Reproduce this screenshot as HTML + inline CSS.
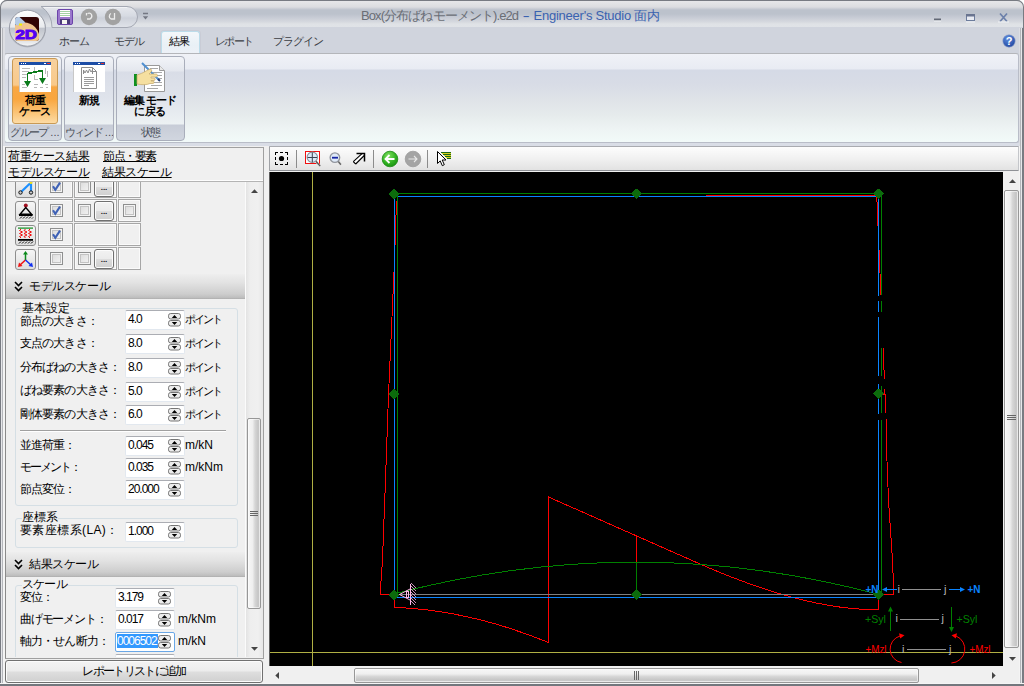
<!DOCTYPE html>
<html lang="ja">
<head>
<meta charset="utf-8">
<title>Engineer's Studio</title>
<style>
html,body{margin:0;padding:0;}
body{width:1024px;height:686px;overflow:hidden;position:relative;background:#fff;font-family:"Liberation Sans",sans-serif;font-size:12px;color:#000;}
.abs{position:absolute;}
.t{position:absolute;white-space:nowrap;line-height:14px;}
/* ---------- window frame ---------- */
#frame{left:0;top:0;width:1024px;height:686px;box-sizing:border-box;background:#d3d7e0;border-radius:7px 7px 0 0;overflow:hidden;}
#frameline{left:0;top:0;width:1024px;height:686px;box-sizing:border-box;border:1px solid #787b82;border-bottom:none;border-radius:7px 7px 0 0;pointer-events:none;}
#client{left:3px;top:146px;width:1018px;height:538px;background:#f0f0f0;}
#titlebar{left:0;top:0;width:1024px;height:27px;background:linear-gradient(#8c8c8c 0px,#8c8c8c 1px,#e7e7e9 1px,#dcdde0 7px,#c6cad2 9px,#bcc2cc 10px,#bcc2cc 14px,#c9cdd6 18px,#d6d9df 22px,#dfe2e6 24px,#e0e3e7 27px);}
#tabrow{left:0;top:27px;width:1024px;height:27px;background:#d0d4dd;}
#ribbon{left:4px;top:53px;width:1015px;height:90px;box-sizing:border-box;border:1px solid #b9bdc8;border-top-color:#b4b6ba;border-radius:3px;background:linear-gradient(#f0f2f7 0px,#e8ebf3 15px,#d5dae6 16px,#d8dce6 30px,#dfe3e8 46px,#e6ebec 61px,#eef4f4 76px,#f2faf9 88px);}
#belowrib{left:0;top:143px;width:1024px;height:4px;background:#d9dde6;}
#lborder,#rborder,#bborder{z-index:5}
#lborder{left:0;top:28px;width:5px;height:658px;background:linear-gradient(#dcdee3 0,#dcdee3 118px,#f4f4f4 118px) 3px 0/2px 100% no-repeat,linear-gradient(90deg,#787b82 0,#787b82 1px,#e6e7ea 1px,#e6e7ea 2px,#b4b6bb 2px,#b4b6bb 3px,#dcdee3 3px,#dcdee3 5px);}
#rborder{left:1019px;top:28px;width:5px;height:658px;background:linear-gradient(#dcdee3 0,#dcdee3 118px,#f4f4f4 118px) 0 0/1px 100% no-repeat,linear-gradient(90deg,#dcdee3 0,#dcdee3 1px,#b4b6bb 1px,#b4b6bb 2px,#e6e7ea 2px,#e6e7ea 3px,#787b82 3px,#787b82 5px);}
#bborder{left:0;top:683px;width:1024px;height:3px;background:linear-gradient(#f4f4f4 0,#f4f4f4 1px,#73777d 1px,#73777d 3px);}
#title{left:361px;top:8px;font-size:13px;line-height:16px;color:#6a6e76;}
#title .g{letter-spacing:-0.9px;}
#title .d{color:#3a62b0;position:absolute;left:163px;top:0;display:inline-block;transform:scaleX(1.7);}
#title .b{color:#3a62b0;letter-spacing:-0.24px;position:absolute;left:169.200px;top:0;white-space:pre;}
.tab{position:absolute;top:34px;font-size:11px;letter-spacing:-1.1px;line-height:14px;color:#3a3d44;white-space:nowrap;}
#tabsel{left:161px;top:31px;width:39px;height:23px;box-sizing:border-box;border:1px solid #bcdcea;border-bottom:none;border-radius:3px 3px 0 0;background:linear-gradient(#f3f7fa,#e9f0f6 60%,#edf1f7);box-shadow:0 0 0 1px #c9ccd6;}
/* ---------- ribbon groups ---------- */
.grp{position:absolute;top:56px;height:85px;box-sizing:border-box;border:1px solid #a9aebb;border-radius:4px;background:linear-gradient(#f2f4f8 0,#e4e7ee 14px,#d9dde7 15px,#dfe3eb 40px,#ecf1f3 67px,#c7ccd7 68px,#d1d6df 83px);overflow:hidden;}
.grp .lbl{position:absolute;left:0;right:0;top:68px;text-align:center;font-size:11px;letter-spacing:-1.8px;line-height:14px;color:#4a4f59;white-space:nowrap;}
.btxt{position:absolute;font-size:11px;letter-spacing:-0.6px;line-height:11px;font-weight:bold;color:#000;text-align:center;white-space:nowrap;}
#actbtn{left:12px;top:58px;width:46px;height:66px;box-sizing:border-box;border:1px solid #c99a55;border-radius:3px;background:linear-gradient(#f7d19e 0,#f9c98a 26px,#f8a744 28px,#f9a63f 40px,#fbc77c 55px,#fde0ae 66px);}
/* ---------- left panel ---------- */
#lpanel{left:5px;top:147px;width:259px;height:512px;box-sizing:border-box;border:1px solid #a0a0a0;border-left-color:#8a8a8a;background:#f0f0f0;}
#links{left:6px;top:148px;width:257px;height:34px;background:#f0f0f0;border-bottom:1px solid #b4b4b4;box-shadow:inset 0 -1px 0 #fdfdfd;box-sizing:border-box;}
.lnk{position:absolute;font-size:12px;letter-spacing:-0.4px;line-height:14px;text-decoration:underline;white-space:nowrap;color:#000;}
#lscroll{left:245px;top:182px;width:18px;height:475px;background:linear-gradient(90deg,#fbfbfb 0,#fbfbfb 1px,#e3e3e3 1px,#eeeeee 5px,#f0f0f0 13px,#e6e6e6 18px,#e6e6e6 19px);box-sizing:border-box;}
.vthumb{position:absolute;box-sizing:border-box;border:1px solid #979797;border-radius:2px;background:linear-gradient(90deg,#f7f7f7 0,#efefef 38%,#d6d6d6 58%,#c5c5c5 85%,#d2d2d2 100%);box-shadow:inset 0 0 0 1px rgba(255,255,255,.55);}
.hthumb{position:absolute;box-sizing:border-box;border:1px solid #979797;border-radius:2px;background:linear-gradient(#f7f7f7 0,#efefef 38%,#d6d6d6 58%,#c5c5c5 85%,#d2d2d2 100%);box-shadow:inset 0 0 0 1px rgba(255,255,255,.55);}
.sechdr{position:absolute;left:6px;width:239px;height:24px;background:linear-gradient(#eeeeee,#e2e2e2 35%,#cdcdcd 80%,#bcbcbc 96%,#a9a9a9);}
.sechdr .t{left:23px;top:5px;font-size:12px;letter-spacing:-0.4px;}
.leg{font-size:12px;background:#f0f0f0;}
.gbox{position:absolute;box-sizing:border-box;border:1px solid #d5dfe5;border-radius:3px;}
.lab{position:absolute;left:20px;font-size:12px;line-height:14px;white-space:nowrap;letter-spacing:-0.9px;}
.inp{position:absolute;width:60px;height:20px;box-sizing:border-box;background:#fff;border:1px solid #e2e8ef;border-top-color:#abadb3;border-radius:2px;}
.inp.foc{border-color:#6aa7e6;}
.inp .v{position:absolute;left:2px;top:1px;font-size:12px;line-height:14px;letter-spacing:-1px;white-space:nowrap;}
.inp .v.sel{background:#3399ff;color:#fff;left:1px;width:41px;overflow:hidden;}
.unit{position:absolute;font-size:12px;line-height:14px;white-space:nowrap;}
.unit.jp{font-size:11px;letter-spacing:-1.9px;}
.spin{position:absolute;right:3px;top:2px;width:13px;height:14px;}
.cell{position:absolute;box-sizing:border-box;border:1px solid #a6a6a6;background:#f0f0f0;box-shadow:inset 0 0 0 1px #fafafa;}
.chk{position:absolute;width:13px;height:13px;box-sizing:border-box;border:1px solid #8e8f8f;background:linear-gradient(135deg,#d8d8d8,#f6f6f6);box-shadow:inset 0 0 0 1px #f4f4f4,inset 0 0 0 2px #c3c3c3;}
.dots{position:absolute;width:20px;height:20px;box-sizing:border-box;border:1px solid #707070;border-radius:3px;background:linear-gradient(#f2f2f2,#ebebeb 50%,#dddddd 51%,#cfcfcf);box-shadow:inset 0 0 0 1px #fcfcfc;font-size:8px;font-weight:bold;letter-spacing:0;color:#111;line-height:19px;text-align:center;}
.ibtn{position:absolute;left:15px;width:21px;height:21px;box-sizing:border-box;border:1px solid #8e8e8e;border-radius:3px;background:linear-gradient(#f6f6f6,#dedede);}
#addbtn{left:5px;top:660px;width:258px;height:23px;box-sizing:border-box;border:1px solid #707070;border-radius:3px;background:linear-gradient(#f3f3f3,#ececec 48%,#dedede 52%,#d0d0d0);box-shadow:inset 0 0 0 1px #fbfbfb;text-align:center;font-size:12px;letter-spacing:-1.7px;line-height:20px;}
/* ---------- canvas ---------- */
#ctool{left:269px;top:146px;width:750px;height:25px;box-sizing:border-box;border:1px solid #c4c6ca;border-top-color:#a9abb0;border-left-color:#a0a2a6;border-bottom-color:#8f9196;border-radius:1px;background:linear-gradient(#fdfdfd,#f1f1f1 50%,#e2e2e2);}
#canvas{left:270px;top:172px;width:733px;height:494px;background:#000;box-shadow:-1px 0 0 #5a5a5a;}
#vscroll{left:1003px;top:172px;width:16px;height:494px;background:#f0f0f0;}
#hscroll{left:270px;top:666px;width:733px;height:17px;background:#f0f0f0;}
#corner{left:1003px;top:666px;width:16px;height:17px;background:#f0f0f0;}
#csplit{left:263px;top:147px;width:7px;height:536px;background:#f0f0f0;}
</style>
</head>
<body>
<div id="frame" class="abs">
<div id="titlebar" class="abs"></div>
<div id="tabrow" class="abs"></div>
<div id="lborder" class="abs"></div>
<div id="rborder" class="abs"></div>
<div id="bborder" class="abs"></div>
<div id="title" class="t"><span class="g">Box(分布ばねモーメント).e2d </span><span class="d">-</span><span class="b"> Engineer's Studio 面内</span></div>
<div id="tabsel" class="abs"></div>
<div class="tab" style="left:59px">ホーム</div>
<div class="tab" style="left:114px">モデル</div>
<div class="tab" style="left:169px;color:#000">結果</div>
<div class="tab" style="left:215px;letter-spacing:-1.7px">レポート</div>
<div class="tab" style="left:273px">プラグイン</div>
<div id="ribbon" class="abs"></div>
<div id="belowrib" class="abs"></div>
<div id="client" class="abs"></div>

<div class="grp" style="left:8px;width:54px"><div class="lbl">グループ<span style="letter-spacing:0"> ...</span></div></div>
<div class="grp" style="left:64px;width:50px"><div class="lbl">ウィンド<span style="letter-spacing:0"> ...</span></div></div>
<div class="grp" style="left:116px;width:69px"><div class="lbl">状態</div></div>
<div id="actbtn" class="abs"></div>
<!-- icon 1: load case window -->
<svg class="abs" style="left:19px;top:62px" width="32" height="30" viewBox="0 0 32 30" shape-rendering="crispEdges">
<rect x="0" y="0" width="32" height="30" fill="#fff" stroke="#c8c8c8" stroke-width="1"/>
<rect x="0" y="0" width="32" height="3" fill="#1c4da6"/>
<rect x="28" y="1" width="3" height="1" fill="#e03030"/><rect x="25" y="1" width="2" height="1" fill="#fff"/>
<rect x="2" y="1" width="1" height="1" fill="#fff"/><rect x="4" y="1" width="1" height="1" fill="#fff"/><rect x="6" y="1" width="1" height="1" fill="#fff"/>
<g fill="#b8b8b8"><rect x="3" y="6" width="8" height="1"/><rect x="3" y="9" width="7" height="1"/><rect x="3" y="12" width="5" height="1"/><rect x="3" y="15" width="4" height="1"/><rect x="3" y="22" width="3" height="1"/><rect x="3" y="25" width="5" height="1"/><rect x="15" y="5" width="1" height="4"/><rect x="26" y="6" width="1" height="6"/><rect x="28" y="9" width="1" height="6"/><rect x="15" y="13" width="1" height="5"/><rect x="16" y="17" width="3" height="1"/><rect x="15" y="22" width="4" height="1"/><rect x="15" y="25" width="3" height="1"/><rect x="21" y="25" width="3" height="1"/><rect x="26" y="22" width="3" height="1"/><rect x="27" y="25" width="2" height="1"/></g>
<path d="M8.5 21V11.5L23.5 8.5V18" fill="none" stroke="#0a7a1a" stroke-width="1.6"/>
<path d="M5 19h7l-3.5 6z M20 16h7l-3.5 6z" fill="#0a7a1a" shape-rendering="auto"/>
</svg>
<div class="btxt" style="left:12px;width:46px;top:95px">荷重</div>
<div class="btxt" style="left:12px;width:46px;top:106px">ケース</div>
<!-- icon 2: new window -->
<svg class="abs" style="left:73px;top:62px" width="32" height="30" viewBox="0 0 32 30" shape-rendering="crispEdges">
<rect x="0" y="0" width="32" height="30" fill="#fff" stroke="#c8c8c8" stroke-width="1"/>
<rect x="0" y="0" width="32" height="3" fill="#1c4da6"/>
<rect x="28" y="1" width="3" height="1" fill="#e03030"/><rect x="25" y="1" width="2" height="1" fill="#fff"/>
<rect x="2" y="1" width="1" height="1" fill="#fff"/><rect x="4" y="1" width="1" height="1" fill="#fff"/><rect x="6" y="1" width="1" height="1" fill="#fff"/>
<path d="M8.5 5.5h11l4 4v17h-15z" fill="#fff" stroke="#8c8c8c" stroke-width="1" shape-rendering="auto"/>
<path d="M19.5 5.5v4h4" fill="none" stroke="#8c8c8c" stroke-width="1" shape-rendering="auto"/>
<path d="M10.5 12v-4l1.5 3 1.5-3 1.5 3 1.5-4 1.5 3 1.5-2v4" fill="none" stroke="#8c8c8c" stroke-width="1" shape-rendering="auto"/>
<g fill="#9a9a9a"><rect x="11" y="15" width="10" height="1"/><rect x="11" y="17" width="10" height="1"/><rect x="11" y="19" width="10" height="1"/><rect x="11" y="21" width="10" height="1"/><rect x="11" y="23" width="5" height="1"/></g>
</svg>
<div class="btxt" style="left:64px;width:50px;top:95px">新規</div>
<!-- icon 3: hand writing -->
<svg class="abs" style="left:133px;top:61px" width="34" height="32" viewBox="0 0 34 32">
<path d="M11.5 4.5h15l5 5v21h-20z" fill="#fff" stroke="#9a9a9a"/>
<path d="M26.5 4.5v5h5" fill="#e8e8e8" stroke="#9a9a9a"/>
<g fill="#a8a8a8"><rect x="17" y="7" width="8" height="1"/><rect x="20" y="11" width="9" height="1"/><rect x="24" y="14" width="5" height="1"/><rect x="24" y="17" width="5" height="1"/><rect x="20" y="21" width="9" height="1"/><rect x="18" y="24" width="11" height="1"/><rect x="14" y="27" width="11" height="1"/></g>
<path d="M9 2L26 19" stroke="#4f8fd0" stroke-width="2"/><path d="M25 18l2 2" stroke="#203a70" stroke-width="2"/>
<rect x="1" y="13" width="3" height="12" fill="#109020"/>
<path d="M4 14c3-1 6-2 9-4l4-2c2 0 2 2 1 3l-2 2h7c2 0 2 3 0 3h-5v1h3c1.500 0 1.500 2.500 0 2.500h-3v.5h2c1.500 0 1.500 2.500 0 2.500h-3c-3 1.500-8 1.500-13 .5z" fill="#f5dfa0" stroke="#c4a868" stroke-width=".7"/>
</svg>
<div class="btxt" style="left:116px;width:68px;top:95px;letter-spacing:-1.1px">編集 モード</div>
<div class="btxt" style="left:116px;width:68px;top:106px">に戻る</div>
<!--RIBBON-->

<!-- quick access toolbar pill -->
<svg class="abs" style="left:0;top:0" width="160" height="56" viewBox="0 0 160 56">
<defs>
<linearGradient id="qg" x1="0" y1="0" x2="0" y2="1"><stop offset="0" stop-color="#e6e8ed"/><stop offset=".45" stop-color="#d6dae2"/><stop offset=".55" stop-color="#cdd1da"/><stop offset="1" stop-color="#e0e3e9"/></linearGradient>
<linearGradient id="ab2" x1="0" y1="0" x2="0" y2="1"><stop offset="0" stop-color="#fefefe"/><stop offset=".47" stop-color="#e9ebee"/><stop offset=".5" stop-color="#c0c4cc"/><stop offset=".78" stop-color="#d6d9de"/><stop offset="1" stop-color="#f6f7f8"/></linearGradient>
<clipPath id="lg"><rect x="15" y="17" width="24" height="24" rx="3"/></clipPath>
</defs>
<path d="M41 6.500H127a10.500 10.500 0 0 1 0 21H52A25 25 0 0 0 41 6.500z" fill="url(#qg)" stroke="#a4a8b3" stroke-width="1"/>
<path d="M44 7.500H127" stroke="#f1f2f5" stroke-width="1" fill="none"/>
<circle cx="27.400" cy="28.800" r="18.600" fill="#b4b8c1"/>
<circle cx="27.400" cy="28.200" r="18" fill="url(#ab2)" stroke="#9a9ea8" stroke-width="1"/>
<!-- app logo -->
<g clip-path="url(#lg)">
<rect x="15" y="17" width="24" height="24" fill="#320404"/>
<circle cx="24" cy="38" r="15.500" fill="#efc48e"/>
<path d="M15 17h4.500l6 5.500-8.500 3-2-1z" fill="#b4cbe6"/>
<rect x="19" y="23.500" width="3" height="2" fill="#f4f000"/>
</g>
<text x="15.500" y="38.800" font-family="Liberation Sans, sans-serif" font-weight="bold" font-size="12.500" fill="#5200f4" stroke="#5200f4" stroke-width=".9" textLength="21.500" lengthAdjust="spacingAndGlyphs">2D</text>
<!-- save -->
<rect x="57.500" y="9.500" width="15" height="15" rx="1.500" fill="#9a78cc" stroke="#6c44aa"/>
<rect x="60" y="10" width="10" height="7" fill="#fff"/><path d="M60 11.500h10M60 13.500h10M60 15.500h10" stroke="#a4d4a4" stroke-width="1"/>
<rect x="60" y="19" width="10" height="5" fill="#4a3a78"/><rect x="62" y="20" width="5" height="4" fill="#f6f6f0"/>
<!-- undo / redo disabled -->
<circle cx="89" cy="17" r="8.200" fill="#a2a2a2"/><circle cx="113" cy="17" r="8.200" fill="#a2a2a2"/>
<path d="M87.500 13.500c4-1.500 6 3 2.500 5.500h-3" fill="none" stroke="#ececec" stroke-width="1.300"/><path d="M86.500 13v2.500" stroke="#ececec" stroke-width="1.300"/>
<path d="M114.500 13v6h-3.500c-2.500-1-2-4.500 0-5.500" fill="none" stroke="#ececec" stroke-width="1.300"/>
<!-- customize -->
<path d="M143 13.500h5" stroke="#747883" stroke-width="1.500"/><path d="M142.800 16.200h5.400l-2.700 3.200z" fill="#747883"/>
</svg>
<!-- window controls -->
<svg class="abs" style="left:925px;top:8px" width="95" height="20" viewBox="0 0 95 20">
<rect x="9" y="10.500" width="7" height="2" fill="#636976"/><rect x="9" y="12.500" width="7" height="1" fill="#f2f3f6"/>
<rect x="41.500" y="6.500" width="8" height="6" fill="#e8ebf2" stroke="#6c7c9c" stroke-width="1"/><rect x="41" y="6" width="9" height="2.500" fill="#6a7590"/><rect x="41" y="13.500" width="9" height="1" fill="#f2f3f6"/>
<path d="M75 5.500l7 8M82 5.500l-7 8" stroke="#6c80aa" stroke-width="1.700"/><rect x="73" y="13.500" width="11" height="1" fill="#f2f3f6"/>
</svg>
<svg class="abs" style="left:1001px;top:33px" width="16" height="16" viewBox="0 0 16 16">
<defs><radialGradient id="hg" cx=".4" cy=".3" r=".8"><stop offset="0" stop-color="#5f8fe0"/><stop offset="1" stop-color="#1a3f9a"/></radialGradient></defs>
<circle cx="8" cy="8" r="6.200" fill="url(#hg)" stroke="#8f9fc8" stroke-width=".6"/>
<text x="8" y="12" text-anchor="middle" font-family="Liberation Sans, sans-serif" font-weight="bold" font-size="11" fill="#fff">?</text>
</svg>
<!--CHROMEICONS-->
<div id="csplit" class="abs"></div>
<div id="lpanel" class="abs"></div>
<div id="links" class="abs"></div>
<div class="lnk" style="left:8px;top:149px">荷重ケース結果</div>
<div class="lnk" style="left:103px;top:149px;letter-spacing:-1.4px">節点・要素</div>
<div class="lnk" style="left:8px;top:165px">モデルスケール</div>
<div class="lnk" style="left:102px;top:165px">結果スケール</div>
<div class="abs" style="left:6px;top:182px;width:240px;height:475px;overflow:hidden"><div class="abs" style="left:-6px;top:-182px">
<div class="cell" style="left:38px;top:175px;width:35px;height:23px"></div>
<div class="cell" style="left:74px;top:175px;width:43px;height:23px"></div>
<div class="cell" style="left:118px;top:175px;width:23px;height:23px"></div>
<div class="ibtn" style="top:177px"></div>
<div class="cell" style="left:38px;top:199px;width:35px;height:23px"></div>
<div class="cell" style="left:74px;top:199px;width:43px;height:23px"></div>
<div class="cell" style="left:118px;top:199px;width:23px;height:23px"></div>
<div class="ibtn" style="top:201px"></div>
<div class="cell" style="left:38px;top:223px;width:35px;height:23px"></div>
<div class="cell" style="left:74px;top:223px;width:43px;height:23px"></div>
<div class="cell" style="left:118px;top:223px;width:23px;height:23px"></div>
<div class="ibtn" style="top:225px"></div>
<div class="cell" style="left:38px;top:247px;width:35px;height:23px"></div>
<div class="cell" style="left:74px;top:247px;width:43px;height:23px"></div>
<div class="cell" style="left:118px;top:247px;width:23px;height:23px"></div>
<div class="ibtn" style="top:249px"></div>
<div class="chk" style="left:50px;top:180px"></div><svg class="abs" style="left:50px;top:180px" width="13" height="13" viewBox="0 0 13 13"><path d="M3 6.200l2.300 3.600L10 2.600" fill="none" stroke="#3f62b6" stroke-width="2.100"/></svg><div class="chk" style="left:78px;top:180px"></div><div class="dots" style="left:94px;top:177px">...</div>
<div class="chk" style="left:50px;top:204px"></div><svg class="abs" style="left:50px;top:204px" width="13" height="13" viewBox="0 0 13 13"><path d="M3 6.200l2.300 3.600L10 2.600" fill="none" stroke="#3f62b6" stroke-width="2.100"/></svg><div class="chk" style="left:78px;top:204px"></div><div class="dots" style="left:94px;top:201px">...</div><div class="chk" style="left:123px;top:204px"></div>
<div class="chk" style="left:50px;top:228px"></div><svg class="abs" style="left:50px;top:228px" width="13" height="13" viewBox="0 0 13 13"><path d="M3 6.200l2.300 3.600L10 2.600" fill="none" stroke="#3f62b6" stroke-width="2.100"/></svg>
<div class="chk" style="left:50px;top:252px"></div><div class="chk" style="left:78px;top:252px"></div><div class="dots" style="left:94px;top:249px">...</div>
<svg class="abs" style="left:15px;top:177px" width="21" height="21" viewBox="0 0 21 21"><path d="M5.500 15.500L16 5.500M16 5v10.500" stroke="#1e90ff" stroke-width="2.200" fill="none"/><circle cx="5.500" cy="15.500" r="1.700" fill="#ccc" stroke="#111"/><circle cx="16" cy="15.500" r="1.700" fill="#ccc" stroke="#111"/><circle cx="16" cy="5.500" r="1.500" fill="#f0e020"/></svg>
<svg class="abs" style="left:15px;top:201px" width="21" height="21" viewBox="0 0 21 21"><circle cx="10.800" cy="4.500" r="2" fill="#a01020"/><path d="M10.800 6.500L5 13.200h11.600z" fill="none" stroke="#000" stroke-width="1.400"/><rect x="4" y="13.200" width="13.600" height="1.800" fill="#000"/><path d="M5 17.500l2-2M8 17.500l2-2M11 17.500l2-2M14 17.500l2-2M17 17.500l1-1" stroke="#000" stroke-width="1"/></svg>
<svg class="abs" style="left:15px;top:225px" width="21" height="21" viewBox="0 0 21 21"><rect x="3" y="2.500" width="15" height="1.200" fill="#0a8a1a"/><path d="M6 4l-1.500 1.500 3 1.500-3 1.500 3 1.500-3 1.500 1.500 1.500M10.500 4l-1.500 1.500 3 1.500-3 1.500 3 1.500-3 1.500 1.500 1.500M15 4l-1.500 1.500 3 1.500-3 1.500 3 1.500-3 1.500 1.500 1.500" fill="none" stroke="#f01010" stroke-width="1"/><rect x="3" y="14" width="15" height="1.800" fill="#000"/><path d="M4 18.500l2-2M7 18.500l2-2M10 18.500l2-2M13 18.500l2-2M16 18.500l2-2" stroke="#000" stroke-width="1"/></svg>
<svg class="abs" style="left:15px;top:249px" width="21" height="21" viewBox="0 0 21 21"><path d="M10.500 11V4" stroke="#0a8a1a" stroke-width="1.500"/><path d="M8 5.500h5L10.500 2z" fill="#0a8a1a"/><path d="M10.500 11L5 16" stroke="#f01010" stroke-width="1.500"/><path d="M3 18l1-4.500 3.500 3.500z" fill="#f01010"/><path d="M10.500 11L16 16" stroke="#1030f0" stroke-width="1.500"/><path d="M18 18l-1-4.500-3.500 3.500z" fill="#1030f0"/></svg>
<div class="sechdr" style="top:274px;height:25px"><svg class="abs" style="left:8px;top:7px" width="9" height="11" viewBox="0 0 9 11"><path d="M1 1l3.500 3.500L8 1M1 6l3.500 3.500L8 6" fill="none" stroke="#000" stroke-width="1.600"/></svg><div class="t">モデルスケール</div></div>
<div class="gbox" style="left:15px;top:308px;width:223px;height:198px"></div>
<div class="t leg" style="left:22px;top:301px">基本設定</div>
<div class="lab" style="top:313.5px">節点の大きさ：</div><div class="inp" style="left:125px;top:310px"><span class="v">4.0</span><svg class="spin" width="13" height="14" viewBox="0 0 13 14"><rect x=".5" y=".5" width="12" height="5.500" rx="2.200" fill="#ececec" stroke="#757575"/><rect x=".5" y="7.500" width="12" height="5.500" rx="2.200" fill="#ececec" stroke="#757575"/><path d="M3.800 5h5.400L6.500 2z M3.800 9h5.400L6.500 12z" fill="#000"/></svg></div><div class="unit jp" style="left:185px;top:312px">ポイント</div>
<div class="lab" style="top:335.5px">支点の大きさ：</div><div class="inp" style="left:125px;top:334px"><span class="v">8.0</span><svg class="spin" width="13" height="14" viewBox="0 0 13 14"><rect x=".5" y=".5" width="12" height="5.500" rx="2.200" fill="#ececec" stroke="#757575"/><rect x=".5" y="7.500" width="12" height="5.500" rx="2.200" fill="#ececec" stroke="#757575"/><path d="M3.800 5h5.400L6.500 2z M3.800 9h5.400L6.500 12z" fill="#000"/></svg></div><div class="unit jp" style="left:185px;top:336px">ポイント</div>
<div class="lab" style="top:359.5px">分布ばねの大きさ：</div><div class="inp" style="left:125px;top:358px"><span class="v">8.0</span><svg class="spin" width="13" height="14" viewBox="0 0 13 14"><rect x=".5" y=".5" width="12" height="5.500" rx="2.200" fill="#ececec" stroke="#757575"/><rect x=".5" y="7.500" width="12" height="5.500" rx="2.200" fill="#ececec" stroke="#757575"/><path d="M3.800 5h5.400L6.500 2z M3.800 9h5.400L6.500 12z" fill="#000"/></svg></div><div class="unit jp" style="left:185px;top:360px">ポイント</div>
<div class="lab" style="top:383px">ばね要素の大きさ：</div><div class="inp" style="left:125px;top:382px"><span class="v">5.0</span><svg class="spin" width="13" height="14" viewBox="0 0 13 14"><rect x=".5" y=".5" width="12" height="5.500" rx="2.200" fill="#ececec" stroke="#757575"/><rect x=".5" y="7.500" width="12" height="5.500" rx="2.200" fill="#ececec" stroke="#757575"/><path d="M3.800 5h5.400L6.500 2z M3.800 9h5.400L6.500 12z" fill="#000"/></svg></div><div class="unit jp" style="left:185px;top:384px">ポイント</div>
<div class="lab" style="top:406.5px">剛体要素の大きさ：</div><div class="inp" style="left:125px;top:405px"><span class="v">6.0</span><svg class="spin" width="13" height="14" viewBox="0 0 13 14"><rect x=".5" y=".5" width="12" height="5.500" rx="2.200" fill="#ececec" stroke="#757575"/><rect x=".5" y="7.500" width="12" height="5.500" rx="2.200" fill="#ececec" stroke="#757575"/><path d="M3.800 5h5.400L6.500 2z M3.800 9h5.400L6.500 12z" fill="#000"/></svg></div><div class="unit jp" style="left:185px;top:407px">ポイント</div>
<div class="abs" style="left:20px;top:430px;width:206px;height:1px;background:#a0a0a0"></div><div class="abs" style="left:20px;top:431px;width:206px;height:1px;background:#fff"></div>
<div class="lab" style="top:438px">並進荷重：</div><div class="inp" style="left:125px;top:436px"><span class="v">0.045</span><svg class="spin" width="13" height="14" viewBox="0 0 13 14"><rect x=".5" y=".5" width="12" height="5.500" rx="2.200" fill="#ececec" stroke="#757575"/><rect x=".5" y="7.500" width="12" height="5.500" rx="2.200" fill="#ececec" stroke="#757575"/><path d="M3.800 5h5.400L6.500 2z M3.800 9h5.400L6.500 12z" fill="#000"/></svg></div><div class="unit" style="left:185px;top:438px">m/kN</div>
<div class="lab" style="top:460px;letter-spacing:-2px">モーメント：</div><div class="inp" style="left:125px;top:458px"><span class="v">0.035</span><svg class="spin" width="13" height="14" viewBox="0 0 13 14"><rect x=".5" y=".5" width="12" height="5.500" rx="2.200" fill="#ececec" stroke="#757575"/><rect x=".5" y="7.500" width="12" height="5.500" rx="2.200" fill="#ececec" stroke="#757575"/><path d="M3.800 5h5.400L6.500 2z M3.800 9h5.400L6.500 12z" fill="#000"/></svg></div><div class="unit" style="left:185px;top:460px">m/kNm</div>
<div class="lab" style="top:482px">節点変位：</div><div class="inp" style="left:125px;top:480px"><span class="v">20.000</span><svg class="spin" width="13" height="14" viewBox="0 0 13 14"><rect x=".5" y=".5" width="12" height="5.500" rx="2.200" fill="#ececec" stroke="#757575"/><rect x=".5" y="7.500" width="12" height="5.500" rx="2.200" fill="#ececec" stroke="#757575"/><path d="M3.800 5h5.400L6.500 2z M3.800 9h5.400L6.500 12z" fill="#000"/></svg></div>
<div class="gbox" style="left:15px;top:518px;width:223px;height:30px"></div>
<div class="t leg" style="left:22px;top:510px">座標系</div>
<div class="lab" style="top:522.5px;letter-spacing:0.4px">要素座標系(LA)：</div><div class="inp" style="left:125px;top:522px"><span class="v">1.000</span><svg class="spin" width="13" height="14" viewBox="0 0 13 14"><rect x=".5" y=".5" width="12" height="5.500" rx="2.200" fill="#ececec" stroke="#757575"/><rect x=".5" y="7.500" width="12" height="5.500" rx="2.200" fill="#ececec" stroke="#757575"/><path d="M3.800 5h5.400L6.500 2z M3.800 9h5.400L6.500 12z" fill="#000"/></svg></div>
<div class="sechdr" style="top:552px;height:25px"><svg class="abs" style="left:8px;top:7px" width="9" height="11" viewBox="0 0 9 11"><path d="M1 1l3.500 3.500L8 1M1 6l3.500 3.500L8 6" fill="none" stroke="#000" stroke-width="1.600"/></svg><div class="t">結果スケール</div></div>
<div class="gbox" style="left:15px;top:585px;width:223px;height:90px"></div>
<div class="t leg" style="left:22px;top:578px;line-height:12px;letter-spacing:-0.8px">スケール</div>
<div class="lab" style="top:590px">変位：</div><div class="inp" style="left:115px;top:588px"><span class="v">3.179</span><svg class="spin" width="13" height="14" viewBox="0 0 13 14"><rect x=".5" y=".5" width="12" height="5.500" rx="2.200" fill="#ececec" stroke="#757575"/><rect x=".5" y="7.500" width="12" height="5.500" rx="2.200" fill="#ececec" stroke="#757575"/><path d="M3.800 5h5.400L6.500 2z M3.800 9h5.400L6.500 12z" fill="#000"/></svg></div>
<div class="lab" style="top:611.5px;letter-spacing:-1.2px">曲げモーメント：</div><div class="inp" style="left:115px;top:610px"><span class="v">0.017</span><svg class="spin" width="13" height="14" viewBox="0 0 13 14"><rect x=".5" y=".5" width="12" height="5.500" rx="2.200" fill="#ececec" stroke="#757575"/><rect x=".5" y="7.500" width="12" height="5.500" rx="2.200" fill="#ececec" stroke="#757575"/><path d="M3.800 5h5.400L6.500 2z M3.800 9h5.400L6.500 12z" fill="#000"/></svg></div><div class="unit" style="left:178px;top:612px">m/kNm</div>
<div class="lab" style="top:634px">軸力・せん断力：</div><div class="inp foc" style="left:115px;top:632px"><span class="v sel">0006502</span><svg class="spin" width="13" height="14" viewBox="0 0 13 14"><rect x=".5" y=".5" width="12" height="5.500" rx="2.200" fill="#ececec" stroke="#757575"/><rect x=".5" y="7.500" width="12" height="5.500" rx="2.200" fill="#ececec" stroke="#757575"/><path d="M3.800 5h5.400L6.500 2z M3.800 9h5.400L6.500 12z" fill="#000"/></svg></div><div class="unit" style="left:178px;top:634px">m/kN</div>
<div class="inp" style="left:115px;top:654px"></div>
</div></div>
<div id="lscroll" class="abs"></div>
<svg class="abs" style="left:251px;top:189px" width="7" height="4" viewBox="0 0 7 4"><path d="M0 4h7L3.500 .3z" fill="#444"/></svg>
<svg class="abs" style="left:251px;top:647px" width="7" height="4" viewBox="0 0 7 4"><path d="M0 0h7L3.500 3.700z" fill="#444"/></svg>
<div class="vthumb" style="left:247px;top:418px;width:14px;height:191px"></div>
<svg class="abs" style="left:250px;top:510px" width="8" height="8" viewBox="0 0 8 8"><path d="M0 1.500h8M0 3.500h8M0 5.500h8" stroke="#666" stroke-width="1"/></svg>
<div id="addbtn" class="abs">レポートリストに追加</div>
<!--LEFTPANEL-->
<div id="ctool" class="abs"></div>

<svg class="abs" style="left:268px;top:146px" width="200" height="25" viewBox="268 146 200 25">
<defs>
<radialGradient id="gg" cx=".4" cy=".3" r=".8"><stop offset="0" stop-color="#7fe060"/><stop offset=".6" stop-color="#2fb020"/><stop offset="1" stop-color="#178a10"/></radialGradient>
</defs>
<!-- select -->
<g shape-rendering="crispEdges" fill="#000"><rect x="275" y="152" width="3" height="1"/><rect x="280" y="152" width="3" height="1"/><rect x="285" y="152" width="3" height="1"/><rect x="275" y="164" width="3" height="1"/><rect x="280" y="164" width="3" height="1"/><rect x="285" y="164" width="3" height="1"/><rect x="275" y="152" width="1" height="3"/><rect x="275" y="157" width="1" height="3"/><rect x="275" y="162" width="1" height="3"/><rect x="287" y="152" width="1" height="3"/><rect x="287" y="157" width="1" height="3"/><rect x="287" y="162" width="1" height="3"/></g>
<circle cx="281.500" cy="158.500" r="2.600" fill="#000"/>
<path d="M296.500 150V167.500M373.500 150V167.500M427.500 150V167.500" stroke="#8c8c8c" stroke-width="1" shape-rendering="crispEdges"/>
<!-- zoom window -->
<rect x="305.500" y="151.500" width="14" height="12" fill="#fbfdff" stroke="#f01010" stroke-width="1" shape-rendering="crispEdges"/>
<path d="M316 161.500l4.300 4.700" stroke="#c8c8c8" stroke-width="2.200"/><path d="M315.800 161.200l4.400 4.800" stroke="#444" stroke-width="1.100"/>
<circle cx="312.300" cy="157.300" r="5.200" fill="#dbe9f8" stroke="#8a8f98" stroke-width="1.100"/>
<path d="M312.300 152.500V162.200M307.500 157.500H317" stroke="#3c4350" stroke-width="1"/>
<!-- zoom out -->
<path d="M338 161l3 3.800" stroke="#c8c8c8" stroke-width="2.200"/><path d="M337.800 160.800l3 3.900" stroke="#555" stroke-width="1.100"/>
<circle cx="334.900" cy="157.600" r="4.800" fill="#dfeaf8" stroke="#92969e" stroke-width="1.300"/>
<rect x="332" y="156.800" width="6" height="1.800" fill="#1424a4"/>
<!-- arrow -->
<path d="M353.300 161.700L362 153.600L364.300 155.500L355.700 164z" fill="#fff"/>
<path d="M353.300 161.700L362 153.600M355.700 164L364.300 155.500M353.300 161.700L355.700 164" fill="none" stroke="#000" stroke-width="1.100"/>
<path d="M356.500 153.500H364.500V161.500" fill="none" stroke="#000" stroke-width="1.500"/>
<!-- back / forward -->
<circle cx="390" cy="159" r="7.800" fill="url(#gg)" stroke="#1c8a14" stroke-width=".8"/>
<path d="M385.500 159h9M389.500 155l-4 4 4 4" fill="none" stroke="#fff" stroke-width="1.800"/>
<circle cx="413" cy="159" r="7.800" fill="#a4a4a4" stroke="#9c9c9c" stroke-width=".8"/>
<path d="M408.500 159h8.500M414 156l3 3-3 3" fill="none" stroke="#e8e8e8" stroke-width="1.100"/>
<!-- cursor list -->
<g shape-rendering="crispEdges"><rect x="441" y="152" width="10" height="1" fill="#1c6a1c"/><rect x="442" y="153" width="9" height="1" fill="#d8d020"/><rect x="443" y="154" width="8" height="1" fill="#1c6a1c"/><rect x="444" y="155" width="7" height="1" fill="#d8d020"/><rect x="445" y="156" width="6" height="1" fill="#1c6a1c"/><rect x="446" y="157" width="5" height="1" fill="#d8d020"/><rect x="447" y="158" width="4" height="1" fill="#1c6a1c"/></g>
<path d="M437.500 151.500v12l2.700-2.600 2.100 4.800 2-1-2.100-4.700h3.800z" fill="#fff" stroke="#000" stroke-width="1"/>
</svg>
<!--CTOOLICONS-->
<div id="canvas" class="abs">
<svg class="abs" style="left:0;top:0" width="733" height="494" viewBox="270 172 733 494" shape-rendering="crispEdges" font-family="Liberation Sans, sans-serif">
<path d="M312.500 172V666M270 652.500H1003" stroke="#b0b044" stroke-width="1" fill="none"/>
<g fill="none" stroke="#ff0000" stroke-width="1">
<path d="M396.500 201L394.500 261L388.500 395L385.500 480L382.500 560L380.500 588V594.500H390"/>
<path d="M394.500 598V607.500H398Q471.500 610.900 548.500 642.500V497L700 564Q796.700 606.500 866 609.500H878.500V598"/>
<path d="M636.500 535V563"/>
<path d="M706 195.500H877"/>
<path d="M876.500 196V202M877.500 202V226M879.500 250V273M880.500 274V295M883.500 348V370M884.500 370V379M884.500 389V394M882 394.500H886M885.500 394V413M886.500 419V448L888.500 500L892.500 560L893.500 586V594.500H884"/>
</g>
<path d="M397 594.500H878" stroke="#808080" stroke-width="1" fill="none"/>
<g fill="none" stroke="#0a84ff" stroke-width="1">
<path d="M394.500 196.500V597.500H878.500M394 196.500H878.500"/>
<path d="M878.500 196V296M878.500 301V312M878.500 317V376M878.500 384V414M878.500 420V597"/>
</g>
<g fill="none" stroke="#008000" stroke-width="1">
<path d="M397 193.500H881.500M397.500 193V594"/>
<path d="M881.500 193V295M881.500 301V312M881.500 348V376M881.500 386V413M881.500 420V594"/>
<path d="M636.500 563V594"/>
<path d="M398 593Q638.500 530.500 879 594.500"/>
</g>
<path d="M388.7 193.8L394.0 188.5L399.3 193.8L394.0 199.1z" fill="#0c6c0c"/>
<path d="M631.2 193.8L636.5 188.5L641.8 193.8L636.5 199.1z" fill="#0c6c0c"/>
<path d="M873.2 193.8L878.5 188.5L883.8 193.8L878.5 199.1z" fill="#0c6c0c"/>
<path d="M388.7 393.8L394.0 388.5L399.3 393.8L394.0 399.1z" fill="#0c6c0c"/>
<path d="M873.2 393.8L878.5 388.5L883.8 393.8L878.5 399.1z" fill="#0c6c0c"/>
<path d="M388.7 594.8L394.0 589.5L399.3 594.8L394.0 600.1z" fill="#0c6c0c"/>
<path d="M631.2 594.8L636.5 589.5L641.8 594.8L636.5 600.1z" fill="#0c6c0c"/>
<path d="M873.2 594.8L878.5 589.5L883.8 594.8L878.5 600.1z" fill="#0c6c0c"/>
<g fill="none" stroke="#ffb8e8" stroke-width="1"><path d="M410 589L399.500 594.500L410 600" shape-rendering="auto"/><path d="M410.500 584V605"/><path d="M406.500 591.500V597.500H408.500V591.500z"/><path d="M411 583l5 5M411 586l5 5M411 589l5 5M411 592l5 5M411 595l5 5M411 598l5 5M411 601l4 4" stroke-width=".8" shape-rendering="auto"/></g>
<g shape-rendering="auto" font-size="11">
<text x="865.500" y="593" fill="#0a84ff" font-weight="bold" textLength="13" lengthAdjust="spacingAndGlyphs">+N</text>
<text x="967.500" y="593" fill="#0a84ff" font-weight="bold" textLength="13" lengthAdjust="spacingAndGlyphs">+N</text>
<path d="M897 589.500H884M949 589.500H962" stroke="#0a84ff" fill="none" shape-rendering="crispEdges"/><path d="M882 589.500l5-2.500v5z M965 589.500l-5-2.500v5z" fill="#0a84ff"/>
<g fill="#b8b8b8"><text x="897.500" y="593">i</text><text x="944" y="593">j</text><text x="895.500" y="622">i</text><text x="941.500" y="622">j</text><text x="902" y="652.500">i</text><text x="949" y="652.500">j</text></g>
<path d="M902 589.500H941M900 619.500H939M907 649.500H946" stroke="#909090" fill="none" shape-rendering="crispEdges"/>
<text x="865" y="622.500" fill="#008000" textLength="21" lengthAdjust="spacingAndGlyphs">+Syl</text>
<text x="956.500" y="622.500" fill="#008000" textLength="21" lengthAdjust="spacingAndGlyphs">+Syl</text>
<path d="M890.500 631V610M951.500 607V628" stroke="#008000" fill="none" shape-rendering="crispEdges"/><path d="M890.500 606.500l-2.500 5h5z M951.500 632l-2.500-5h5z" fill="#008000"/>
<text x="865.500" y="652.500" fill="#ff0000" textLength="21" lengthAdjust="spacingAndGlyphs">+Mzl</text>
<text x="969.500" y="652.500" fill="#ff0000" textLength="21" lengthAdjust="spacingAndGlyphs">+Mzl</text>
<path d="M900 636A13.600 13.600 0 0 0 901.500 662.500" stroke="#ff0000" fill="none"/><path d="M904.500 635.200l-5.500-2 1.200 5.300z" fill="#ff0000"/>
<path d="M956 636A14 14 0 0 1 951.400 663" stroke="#ff0000" fill="none"/><path d="M951.500 635.200l5.500-2-1.200 5.300z" fill="#ff0000"/>
</g>
</svg>
<!--DRAWING-->
</div>
<div id="vscroll" class="abs"></div>
<div id="hscroll" class="abs"></div>
<div id="corner" class="abs"></div>

<svg class="abs" style="left:1009px;top:179px" width="7" height="4" viewBox="0 0 7 4"><path d="M0 4h7L3.500 .3z" fill="#444"/></svg>
<svg class="abs" style="left:1009px;top:657px" width="7" height="4" viewBox="0 0 7 4"><path d="M0 0h7L3.500 3.700z" fill="#444"/></svg>
<div class="vthumb" style="left:1004px;top:190px;width:15px;height:458px"></div>
<svg class="abs" style="left:1007px;top:414px" width="9" height="8" viewBox="0 0 9 8"><path d="M0 1.500h9M0 3.500h9M0 5.500h9" stroke="#666" stroke-width="1"/></svg>
<svg class="abs" style="left:275px;top:672px" width="4" height="7" viewBox="0 0 4 7"><path d="M4 0v7L.3 3.500z" fill="#444"/></svg>
<svg class="abs" style="left:992px;top:672px" width="4" height="7" viewBox="0 0 4 7"><path d="M0 0v7L3.700 3.500z" fill="#444"/></svg>
<div class="hthumb" style="left:354px;top:668px;width:565px;height:15px"></div>
<svg class="abs" style="left:633px;top:671px" width="8" height="9" viewBox="0 0 8 9"><path d="M1.500 0v9M3.500 0v9M5.500 0v9" stroke="#666" stroke-width="1"/></svg>
<!--SCROLLS-->
<div id="lborder2"></div>
</div>
<div id="frameline" class="abs"></div>
</body>
</html>
